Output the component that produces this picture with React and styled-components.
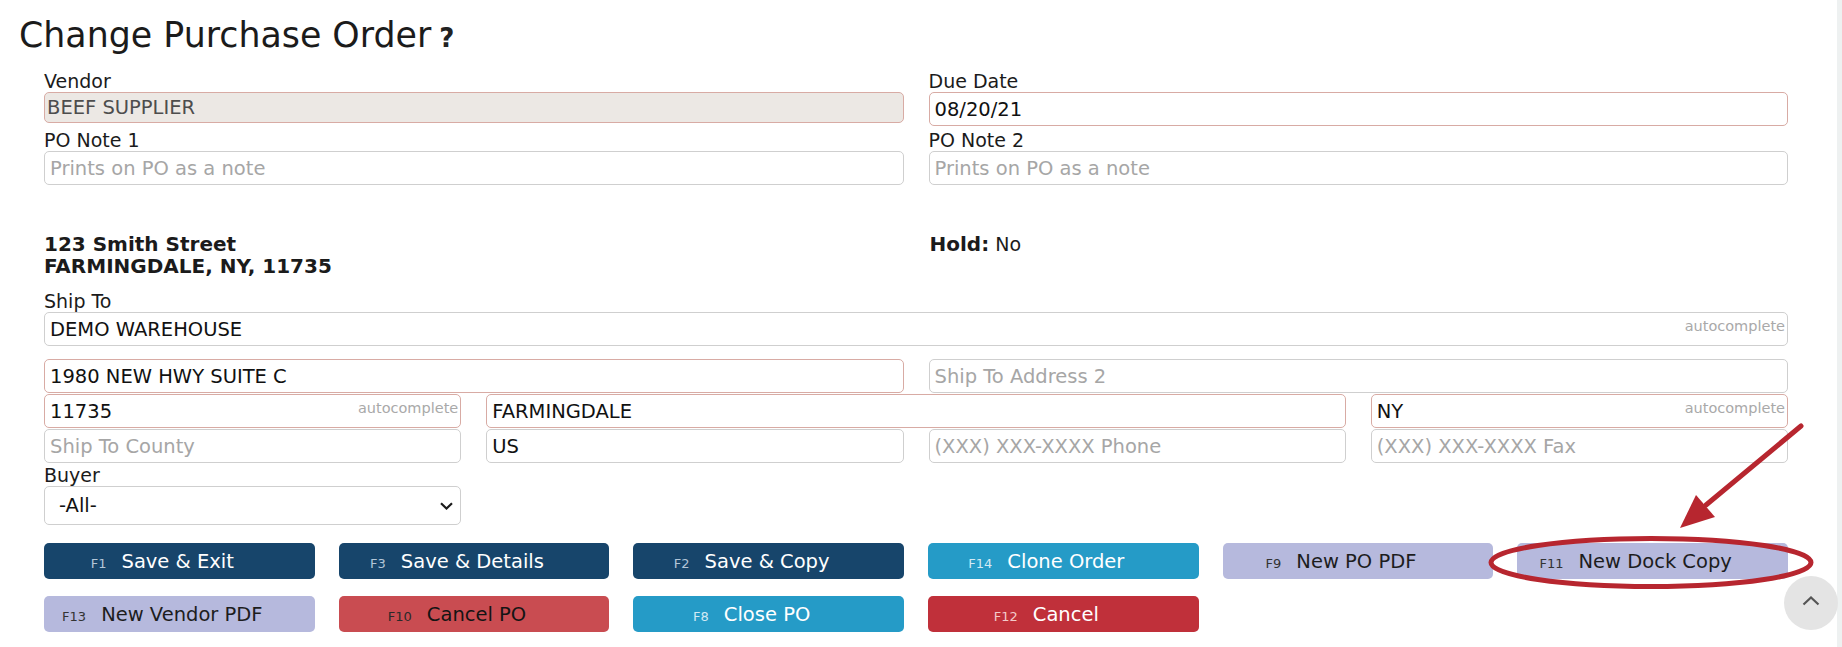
import React from "react";
import styled, { createGlobalStyle } from "styled-components";

const GlobalStyle = createGlobalStyle`
  html, body {
    margin: 0;
    padding: 0;
    background: #ffffff;
  }
  body {
    font-family: "DejaVu Sans", Verdana, sans-serif;
    color: #1b1b1b;
  }
  * {
    box-sizing: border-box;
  }
`;

const variants = {
  navy: { bg: "#17456b", fg: "#ffffff", key: "#b3c6d8" },
  sky: { bg: "#259bc7", fg: "#ffffff", key: "#d3eaf4" },
  lilac: { bg: "#b6b9dd", fg: "#1d1d1d", key: "#333333" },
  rose: { bg: "#c94c51", fg: "#141414", key: "#2a2a2a" },
  red: { bg: "#c0303a", fg: "#ffffff", key: "#f3caca" },
};

function PurchaseOrder() {
  return (
    <Page>
      <GlobalStyle />
      <Main>
        <Title>
          Change Purchase Order<Help>?</Help>
        </Title>

        <Form>
          <Grid>
            <Field $span={2}>
              <Label>Vendor</Label>
              <ReadOnlyInput readOnly value="BEEF SUPPLIER" />
            </Field>
            <Field $span={2}>
              <Label>Due Date</Label>
              <TextInput $required defaultValue="08/20/21" />
            </Field>
            <Field $span={2}>
              <Label>PO Note 1</Label>
              <TextInput placeholder="Prints on PO as a note" />
            </Field>
            <Field $span={2}>
              <Label>PO Note 2</Label>
              <TextInput placeholder="Prints on PO as a note" />
            </Field>
          </Grid>

          <InfoRow>
            <Address>
              123 Smith Street
              <br />
              FARMINGDALE, NY, 11735
            </Address>
            <Hold>
              <strong>Hold:</strong> No
            </Hold>
          </InfoRow>

          <ShipBlock>
            <Label>Ship To</Label>
            <InputBox>
              <TextInput defaultValue="DEMO WAREHOUSE" />
              <Hint>autocomplete</Hint>
            </InputBox>
          </ShipBlock>

          <AddressGrid>
            <Field $span={2}>
              <TextInput $required defaultValue="1980 NEW HWY SUITE C" />
            </Field>
            <Field $span={2}>
              <TextInput placeholder="Ship To Address 2" />
            </Field>

            <Field>
              <InputBox>
                <TextInput $required defaultValue="11735" />
                <Hint>autocomplete</Hint>
              </InputBox>
            </Field>
            <Field $span={2}>
              <TextInput $required defaultValue="FARMINGDALE" />
            </Field>
            <Field>
              <InputBox>
                <TextInput $required defaultValue="NY" />
                <Hint>autocomplete</Hint>
              </InputBox>
            </Field>

            <Field>
              <TextInput placeholder="Ship To County" />
            </Field>
            <Field>
              <TextInput defaultValue="US" />
            </Field>
            <Field>
              <TextInput placeholder="(XXX) XXX-XXXX Phone" />
            </Field>
            <Field>
              <TextInput placeholder="(XXX) XXX-XXXX Fax" />
            </Field>

            <Field>
              <Label>Buyer</Label>
              <SelectBox>
                <Select defaultValue="all">
                  <option value="all">-All-</option>
                </Select>
                <Chevron width="13" height="8" viewBox="0 0 13 8">
                  <path d="M1 1.2 L6.5 6.5 L12 1.2" fill="none" stroke="#1b1b1b" strokeWidth="2.2" />
                </Chevron>
              </SelectBox>
            </Field>
          </AddressGrid>

          <Actions>
            <ActionButton $variant="navy"><Key $variant="navy">F1</Key>Save &amp; Exit</ActionButton>
            <ActionButton $variant="navy"><Key $variant="navy">F3</Key>Save &amp; Details</ActionButton>
            <ActionButton $variant="navy"><Key $variant="navy">F2</Key>Save &amp; Copy</ActionButton>
            <ActionButton $variant="sky"><Key $variant="sky">F14</Key>Clone Order</ActionButton>
            <ActionButton $variant="lilac"><Key $variant="lilac">F9</Key>New PO PDF</ActionButton>
            <ActionButton $variant="lilac"><Key $variant="lilac">F11</Key>New Dock Copy</ActionButton>
            <ActionButton $variant="lilac"><Key $variant="lilac">F13</Key>New Vendor PDF</ActionButton>
            <ActionButton $variant="rose"><Key $variant="rose">F10</Key>Cancel PO</ActionButton>
            <ActionButton $variant="sky"><Key $variant="sky">F8</Key>Close PO</ActionButton>
            <ActionButton $variant="red"><Key $variant="red">F12</Key>Cancel</ActionButton>
          </Actions>
        </Form>
      </Main>
      <ScrollTrack />

      <ToTop aria-label="Back to top">
        <svg width="18" height="10" viewBox="0 0 18 10">
          <path d="M1.5 8.5 L9 1.5 L16.5 8.5" fill="none" stroke="#555" strokeWidth="2.2" />
        </svg>
      </ToTop>

      <Annotation width="1842" height="647" viewBox="0 0 1842 647">
        <ellipse cx="1651" cy="562.5" rx="160" ry="24" fill="none" stroke="#b7262f" strokeWidth="5" />
        <line x1="1801" y1="426" x2="1706" y2="505" stroke="#b7262f" strokeWidth="5" strokeLinecap="round" />
        <polygon points="1680,528 1696,495 1715,517" fill="#b7262f" />
      </Annotation>
    </Page>
  );
}

const Page = styled.div`
  position: relative;
  display: flex;
  width: 1842px;
  height: 647px;
  overflow: hidden;
`;

const Main = styled.main`
  flex: 1;
  padding-top: 15px;
`;

const ScrollTrack = styled.div`
  width: 5px;
  background: #eef1f1;
`;

const Title = styled.h1`
  margin: 0 0 0 19px;
  font-size: 34.8px;
  font-weight: normal;
  line-height: 40px;
  color: #1b1b1b;
`;

const Help = styled.span`
  margin-left: 8px;
  font-size: 26px;
  font-weight: bold;
  color: #222;
`;

const Form = styled.div`
  width: 1744px;
  margin: 12px 0 0 44px;
`;

const Grid = styled.div`
  display: grid;
  grid-template-columns: repeat(4, 1fr);
  column-gap: 25px;
  row-gap: 3px;
  align-items: start;
`;

const AddressGrid = styled(Grid)`
  margin-top: 13px;
  row-gap: 1px;
`;

const Field = styled.div`
  grid-column: span ${(p) => p.$span || 1};
  display: flex;
  flex-direction: column;
`;

const Label = styled.label`
  font-size: 19px;
  line-height: 22px;
  color: #1b1b1b;
`;

const TextInput = styled.input`
  width: 100%;
  height: 34px;
  padding: 0 5px;
  border: 1px solid ${(p) => (p.$required ? "#d8aba4" : "#cfcfcf")};
  border-radius: 5px;
  background: #fff;
  font-family: "DejaVu Sans", Verdana, sans-serif;
  font-size: 19.5px;
  color: #111;
  outline: none;

  &::placeholder {
    color: #a6a6a6;
  }
`;

const ReadOnlyInput = styled(TextInput)`
  height: 31px;
  padding: 0 2px;
  border-color: #d8aba4;
  background: #ece8e4;
  font-size: 19.5px;
  color: #4d4d4d;
`;

const InputBox = styled.div`
  position: relative;
`;

const Hint = styled.span`
  position: absolute;
  top: 6px;
  right: 3px;
  font-size: 14.5px;
  color: #a9a9a9;
  pointer-events: none;
`;

const InfoRow = styled.div`
  display: grid;
  grid-template-columns: 1fr 1fr;
  column-gap: 25px;
  margin-top: 48px;
`;

const Address = styled.div`
  font-size: 20px;
  font-weight: bold;
  line-height: 22px;
  color: #1b1b1b;
`;

const Hold = styled.div`
  font-size: 19px;
  line-height: 22px;
  padding-left: 1px;
  strong {
    font-size: 20px;
  }
`;

const ShipBlock = styled.div`
  display: flex;
  flex-direction: column;
  margin-top: 13px;
`;

const SelectBox = styled.div`
  position: relative;
`;

const Select = styled.select`
  width: 100%;
  height: 39px;
  padding: 0 0 0 14px;
  border: 1px solid #cfcfcf;
  border-radius: 5px;
  background: #fff;
  appearance: none;
  font-family: "DejaVu Sans", Verdana, sans-serif;
  font-size: 19.5px;
  color: #111;
`;

const Chevron = styled.svg`
  position: absolute;
  right: 8px;
  top: 16px;
  pointer-events: none;
`;

const Actions = styled.div`
  display: grid;
  grid-template-columns: repeat(6, 1fr);
  column-gap: 24px;
  row-gap: 17px;
  margin-top: 18px;
`;

const ActionButton = styled.button`
  display: flex;
  align-items: center;
  justify-content: center;
  height: 36px;
  padding: 0 34px 0 0;
  border: none;
  border-radius: 5px;
  background: ${(p) => variants[p.$variant].bg};
  color: ${(p) => variants[p.$variant].fg};
  font-family: "DejaVu Sans", Verdana, sans-serif;
  font-size: 19.5px;
  white-space: nowrap;
  cursor: pointer;
`;

const Key = styled.span`
  margin-right: 15px;
  padding-top: 5px;
  font-size: 13px;
  color: ${(p) => variants[p.$variant].key};
`;

const ToTop = styled.button`
  position: absolute;
  right: 4px;
  bottom: 17px;
  display: flex;
  align-items: center;
  justify-content: center;
  width: 54px;
  height: 54px;
  padding: 0 0 4px;
  border: none;
  border-radius: 50%;
  background: #e4e4e4;
`;

const Annotation = styled.svg`
  position: absolute;
  top: 0;
  left: 0;
  pointer-events: none;
`;

export default function App() {
  return <PurchaseOrder />;
}
